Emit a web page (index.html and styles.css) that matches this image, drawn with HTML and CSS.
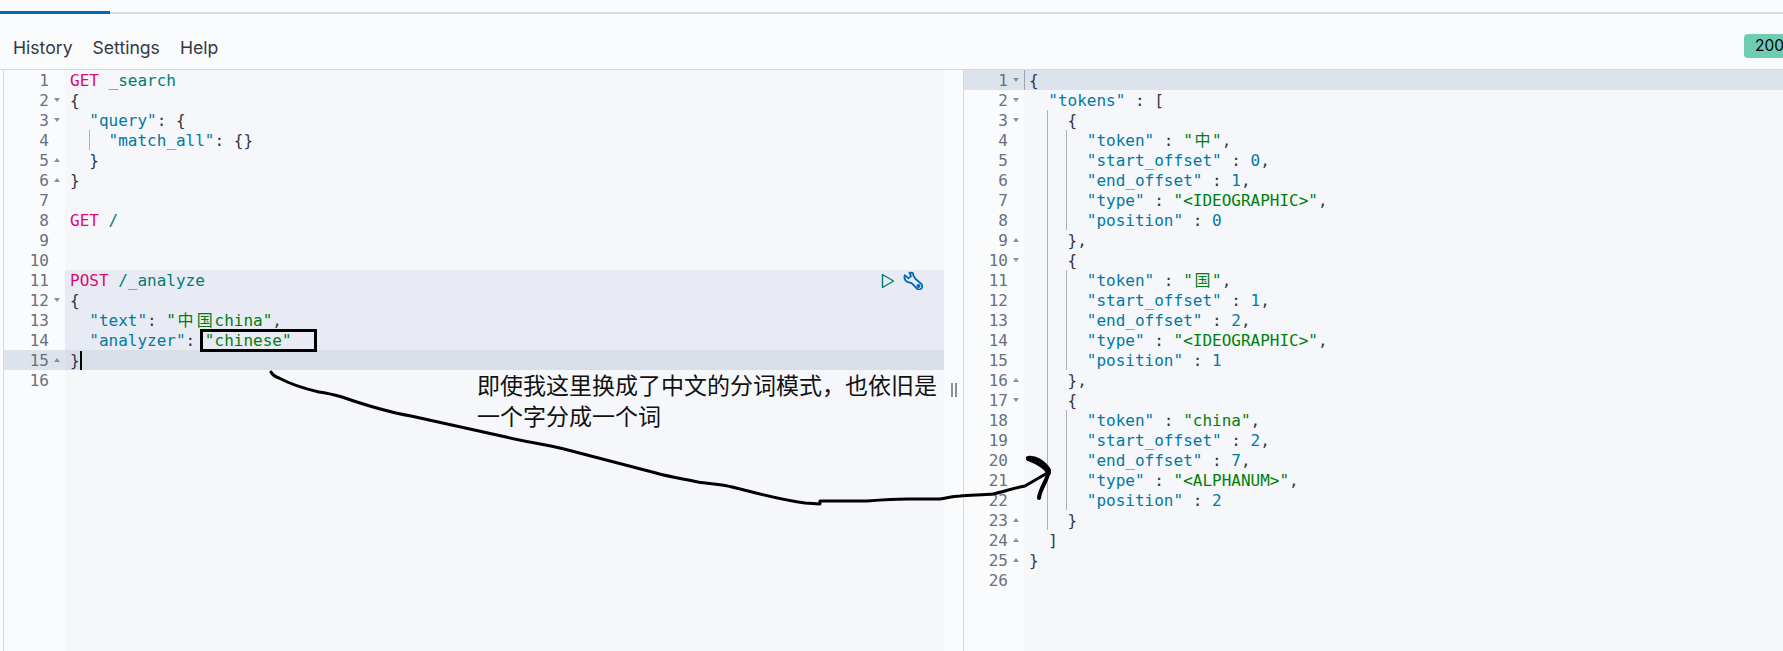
FILE: index.html
```html
<!DOCTYPE html>
<html lang="zh">
<head>
<meta charset="utf-8">
<title>Dev Tools Console</title>
<link rel="stylesheet" href="styles.css">
</head>
<body>
<div class="page">
  <div class="tabs"><div class="tab-active"></div></div>
  <nav class="menu">
    <a class="menu-item">History</a>
    <a class="menu-item">Settings</a>
    <a class="menu-item">Help</a>
    <span class="status">200 - OK</span>
  </nav>
  <main class="panes">
    <section class="editor editor-left">
      <div class="row"><span class="gut">1</span><span class="code"><i class="m">GET</i> <i class="u">_search</i></span></div>
      <div class="row"><span class="gut fd">2</span><span class="code">{</span></div>
      <div class="row"><span class="gut fd">3</span><span class="code">  <i class="k">"query"</i>: {</span></div>
      <div class="row"><span class="gut">4</span><span class="code gl">    <i class="k">"match_all"</i>: {}</span></div>
      <div class="row"><span class="gut fu">5</span><span class="code">  }</span></div>
      <div class="row"><span class="gut fu">6</span><span class="code">}</span></div>
      <div class="row"><span class="gut">7</span><span class="code"></span></div>
      <div class="row"><span class="gut">8</span><span class="code"><i class="m">GET</i> <i class="u">/</i></span></div>
      <div class="row"><span class="gut">9</span><span class="code"></span></div>
      <div class="row"><span class="gut">10</span><span class="code"></span></div>
      <div class="row"><span class="gut">11</span><span class="code sel"><span class="actions"><svg class="ic-play" viewBox="0 0 14 16" width="14" height="16"><path d="M1.5 1.5 L12.5 8 L1.5 14.5 Z"/></svg><svg class="ic-wrench" viewBox="0 0 21 21" width="21" height="21"><path d="M6.5 1.6 L9.6 1.9 L10.6 5 L12.6 8 L18.4 13 Q20 15 18.6 17.4 Q16.6 19.4 14.4 18 L8.6 12.2 L5 11.2 Q1.6 9.6 1.4 6.4 L1.8 4.2 L5.4 7.4 L8 5.4 Z"/><circle cx="15.5" cy="15" r="1.1"/></svg></span><i class="m">POST</i> <i class="u">/_analyze</i></span></div>
      <div class="row"><span class="gut fd">12</span><span class="code sel">{</span></div>
      <div class="row"><span class="gut">13</span><span class="code sel">  <i class="k">"text"</i>: <i class="s">"<b class="cjk">中</b><b class="cjk">国</b>china"</i>,</span></div>
      <div class="row"><span class="gut">14</span><span class="code sel">  <i class="k">"analyzer"</i>: <i class="s">"chinese"</i></span></div>
      <div class="row active"><span class="gut fu">15</span><span class="code">}<span class="caret"></span></span></div>
      <div class="row"><span class="gut">16</span><span class="code"></span></div>
      <div class="row fill"><span class="gut"></span><span class="code"></span></div>
    </section>
    <div class="divider"><span class="handle"></span></div>
    <section class="editor editor-right">
      <div class="row active"><span class="gut fd">1</span><span class="code cur">{</span></div>
      <div class="row"><span class="gut fd">2</span><span class="code">  <i class="k">"tokens"</i> : [</span></div>
      <div class="row"><span class="gut fd">3</span><span class="code g1">    {</span></div>
      <div class="row"><span class="gut">4</span><span class="code g2">      <i class="k">"token"</i> : <i class="s">"<b class="cjk">中</b>"</i>,</span></div>
      <div class="row"><span class="gut">5</span><span class="code g2">      <i class="k">"start_offset"</i> : <i class="k">0</i>,</span></div>
      <div class="row"><span class="gut">6</span><span class="code g2">      <i class="k">"end_offset"</i> : <i class="k">1</i>,</span></div>
      <div class="row"><span class="gut">7</span><span class="code g2">      <i class="k">"type"</i> : <i class="s">"&lt;IDEOGRAPHIC&gt;"</i>,</span></div>
      <div class="row"><span class="gut">8</span><span class="code g2">      <i class="k">"position"</i> : <i class="k">0</i></span></div>
      <div class="row"><span class="gut fu">9</span><span class="code g1">    },</span></div>
      <div class="row"><span class="gut fd">10</span><span class="code g1">    {</span></div>
      <div class="row"><span class="gut">11</span><span class="code g2">      <i class="k">"token"</i> : <i class="s">"<b class="cjk">国</b>"</i>,</span></div>
      <div class="row"><span class="gut">12</span><span class="code g2">      <i class="k">"start_offset"</i> : <i class="k">1</i>,</span></div>
      <div class="row"><span class="gut">13</span><span class="code g2">      <i class="k">"end_offset"</i> : <i class="k">2</i>,</span></div>
      <div class="row"><span class="gut">14</span><span class="code g2">      <i class="k">"type"</i> : <i class="s">"&lt;IDEOGRAPHIC&gt;"</i>,</span></div>
      <div class="row"><span class="gut">15</span><span class="code g2">      <i class="k">"position"</i> : <i class="k">1</i></span></div>
      <div class="row"><span class="gut fu">16</span><span class="code g1">    },</span></div>
      <div class="row"><span class="gut fd">17</span><span class="code g1">    {</span></div>
      <div class="row"><span class="gut">18</span><span class="code g2">      <i class="k">"token"</i> : <i class="s">"china"</i>,</span></div>
      <div class="row"><span class="gut">19</span><span class="code g2">      <i class="k">"start_offset"</i> : <i class="k">2</i>,</span></div>
      <div class="row"><span class="gut">20</span><span class="code g2">      <i class="k">"end_offset"</i> : <i class="k">7</i>,</span></div>
      <div class="row"><span class="gut">21</span><span class="code g2">      <i class="k">"type"</i> : <i class="s">"&lt;ALPHANUM&gt;"</i>,</span></div>
      <div class="row"><span class="gut">22</span><span class="code g2">      <i class="k">"position"</i> : <i class="k">2</i></span></div>
      <div class="row"><span class="gut fu">23</span><span class="code g1">    }</span></div>
      <div class="row"><span class="gut fu">24</span><span class="code">  ]</span></div>
      <div class="row"><span class="gut fu">25</span><span class="code">}</span></div>
      <div class="row"><span class="gut">26</span><span class="code"></span></div>
      <div class="row fill"><span class="gut"></span><span class="code"></span></div>
    </section>
  </main>
  <svg class="ink" viewBox="0 0 1783 651" width="1783" height="651">
    <rect class="ink-box" x="201.5" y="330.5" width="114" height="20"/>
    <path class="ink-line" d="M271 372 C273 376 276 377 279 378 C292 385 306 389 319 392 C327 393 335 395 342 397 C365 405 388 412 411 416 C443 423 475 430 506 437 C525 442 545 444 564 449 C595 457 625 465 656 473 C670 477 684 479 698 482 C709 484 721 484 732 487 C756 493 781 500 805 503 L820 504 L820 501 C835 501 851 501 867 501 C880 500 893 499 907 499 C918 499 929 499 940 499 C947 498 953 496 960 496 C971 495 982 495 993 494 C1002 492 1011 489 1020 487 L1025 486 L1049 472"/>
    <path class="ink-line ink-head" d="M1028 458 C1035 457 1043 461 1049 470 C1048 480 1040 488 1039 498"/>
    <path class="ink-line ink-head" d="M1028 459 C1036 462 1044 466 1049 473"/>
  </svg>
  <p class="note">即使我这里换成了中文的分词模式，也依旧是<br>一个字分成一个词</p>
</div>
</body>
</html>
```
FILE: styles.css
```css
html, body { margin: 0; height: 100%; overflow: hidden; }
.page {
  position: relative;
  display: flex;
  flex-direction: column;
  height: 651px;
  width: 1783px;
  overflow: hidden;
  background: #fafbfd;
  font-family: Inter, "Noto Sans", sans-serif;
  color: #343741;
}
.tabs { height: 14px; box-sizing: border-box; padding-top: 11px; position: relative; }
.tabs::after { content: ""; display: block; height: 2px; margin-top: 1px; background: #d3dae6; }
.tab-active { position: absolute; left: 0; top: 11px; width: 110px; height: 3px; background: #006bb4; z-index: 1; }
.menu {
  display: flex;
  align-items: center;
  height: 56px;
  box-sizing: border-box;
  padding: 11px 0 0 13px;
  border-bottom: 1px solid #d3dae6;
  font-size: 17.6px;
}
.menu-item { margin-right: 20px; color: #343741; }
.status {
  margin-left: auto;
  margin-right: -51px;
  width: 90px;
  height: 24px;
  margin-top: -2px;
  box-sizing: border-box;
  padding-left: 11px;
  line-height: 24px;
  font-size: 15.5px;
  border-radius: 4px;
  background: #6dccb1;
  color: #000;
  flex-shrink: 0;
  white-space: nowrap;
}
.panes { flex: 1; display: flex; padding-left: 3px; min-height: 0; }
.editor {
  display: flex;
  flex-direction: column;
  font: 16px/20px "DejaVu Sans Mono", "Noto Sans CJK SC", monospace;
  border-left: 1px solid #d3dae6;
  box-sizing: border-box;
}
.editor-left { width: 941px; flex-shrink: 0; }
.editor-right { flex: 1; }
.divider { width: 19px; flex-shrink: 0; display: flex; justify-content: center; padding-top: 313px; box-sizing: border-box; }
.handle { width: 6px; height: 14px; border-left: 2px solid #8a8f99; border-right: 2px solid #8a8f99; box-sizing: border-box; }
.row { display: flex; height: 20px; flex-shrink: 0; }
.row.fill { flex: 1; }
.gut {
  position: relative;
  width: 61px;
  box-sizing: border-box;
  padding: 1px 16px 0 0;
  text-align: right;
  color: #69707d;
  flex-shrink: 0;
}
.editor-right .gut { width: 60px; }
.fd::after, .fu::after {
  content: "";
  position: absolute;
  right: 5px;
  top: 8px;
  border-left: 3.5px solid transparent;
  border-right: 3.5px solid transparent;
}
.fd::after { border-top: 4px solid #8a8f99; }
.fu::after { border-bottom: 4px solid #8a8f99; }
.code {
  flex: 1;
  display: block;
  box-sizing: border-box;
  white-space: pre;
  padding: 1px 0 0 5px;
  background: #f5f7fa no-repeat;
  color: #343741;
}
.code i { font-style: normal; }
.code b { font-weight: normal; }
.cjk { display: inline-block; width: 2ch; text-align: center; }
.m { color: #dd0a73; }
.u { color: #017d73; }
.k { color: #0079a5; }
.s { color: #007f0f; }
.sel { background-color: #e8ebf3; }
.active .gut { background: #dde3ec; }
.active .code { background-color: #d9dfe8; }
.editor-right .active .code { background-color: #dde3ec; }
.cur { box-shadow: inset 1px 0 0 #9aa2b0; }
.caret { display: inline-block; width: 2px; height: 20px; background: #000; vertical-align: top; }
.gl { background-image: linear-gradient(#a9b1bf, #a9b1bf); background-position: 24px 0; background-size: 1px 100%; }
.g1 { background-image: linear-gradient(#a9b1bf, #a9b1bf); background-position: 23px 0; background-size: 1px 100%; }
.g2 {
  background-image: linear-gradient(#a9b1bf, #a9b1bf), linear-gradient(#a9b1bf, #a9b1bf);
  background-position: 23px 0, 42px 0;
  background-size: 1px 100%, 1px 100%;
  background-repeat: no-repeat;
}
.actions { float: right; display: flex; align-items: center; gap: 8px; padding-right: 20px; height: 20px; }
.ic-play path { fill: none; stroke: #017d73; stroke-width: 1.4; stroke-linejoin: round; }
.ic-wrench path, .ic-wrench circle { fill: none; stroke: #006bb4; stroke-width: 1.8; stroke-linejoin: round; }
.ink { position: absolute; left: 0; top: 0; pointer-events: none; }
.ink-box { fill: none; stroke: #000; stroke-width: 3; }
.ink-line { fill: none; stroke: #000; stroke-width: 3; stroke-linecap: round; stroke-linejoin: round; }
.ink-head { stroke-width: 4; }
.note {
  position: absolute;
  left: 477px;
  top: 369px;
  margin: 0;
  font: 23px/31px "Noto Sans CJK SC", sans-serif;
  color: #111;
  white-space: nowrap;
}
```
